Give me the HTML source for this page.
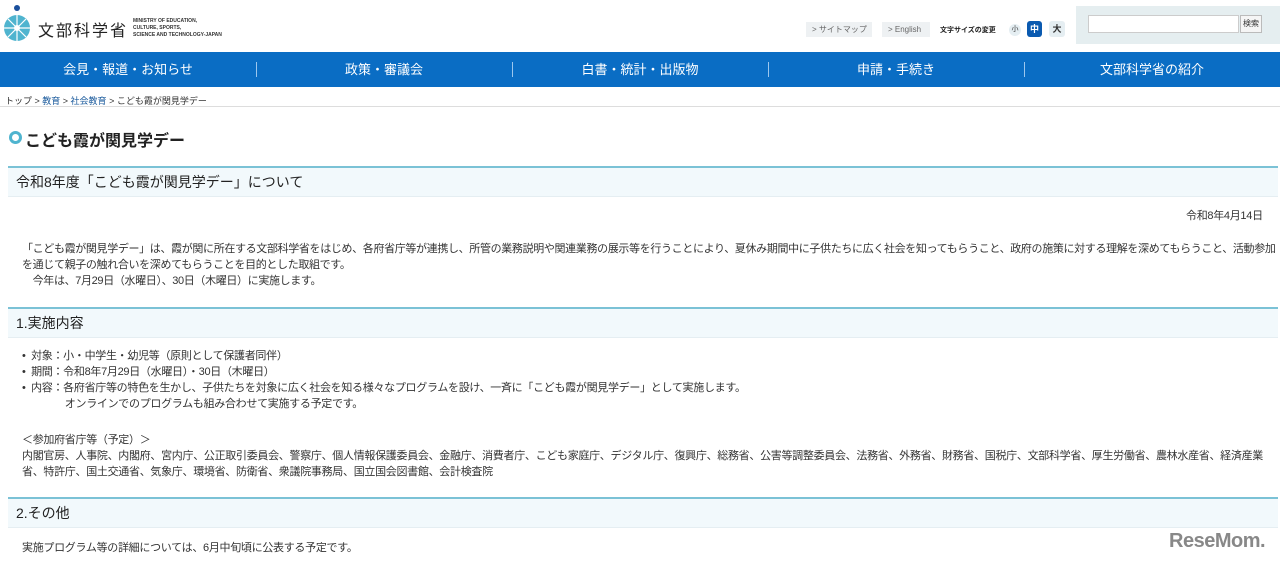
<!DOCTYPE html>
<html><head><meta charset="utf-8"><style>
body{margin:0;width:1280px;height:566px;overflow:hidden;background:#fff;font-family:"Liberation Sans","Noto Sans CJK JP",sans-serif;color:#333;font-size:11px}
.abs{position:absolute}
.nav{position:absolute;top:52px;left:0;width:1280px;height:35px;background:#0a6dc4;display:flex}
.nav div{flex:1;color:#fff;font-size:13px;text-align:center;line-height:35px;position:relative}
.nav div+div:before{content:"";position:absolute;left:0;top:10px;height:15px;border-left:1px solid #9cc7ee}
h2{position:absolute;left:8px;width:1270px;margin:0;font-weight:normal;font-size:14px;color:#222;background:#f2f9fc;border-top:2px solid #7bc2d6;height:28px;line-height:28px;text-indent:8px;border-bottom:1px solid #e5eef2}
p{position:absolute;margin:0;font-size:11px;line-height:16px;color:#333;letter-spacing:-0.3px}
</style></head><body>
<svg class="abs" style="left:2px;top:4px" width="32" height="40" viewBox="0 0 32 40"><circle cx="15" cy="4" r="3" fill="#1a4f9c"/><circle cx="15" cy="24" r="13" fill="#4fb4cf"/><g stroke="#fff" stroke-width="1.2"><line x1="15" y1="11" x2="15" y2="37"/><line x1="2" y1="24" x2="28" y2="24"/><line x1="6" y1="15" x2="24" y2="33"/><line x1="24" y1="15" x2="6" y2="33"/></g><circle cx="15" cy="24" r="3" fill="#fff"/></svg>
<div class="abs" style="left:38px;top:17px;font-size:16px;color:#222;letter-spacing:2px">文部科学省</div>
<div class="abs" style="left:133px;top:18px;font-size:5px;line-height:7px;color:#333;font-weight:bold">MINISTRY OF EDUCATION,<br>CULTURE, SPORTS,<br>SCIENCE AND TECHNOLOGY-JAPAN</div>
<div class="abs" style="left:806px;top:22px;width:66px;height:15px;background:#eef1f3;font-size:8px;line-height:15px;color:#666;text-indent:6px">&gt; サイトマップ</div>
<div class="abs" style="left:882px;top:22px;width:48px;height:15px;background:#eef1f3;font-size:8px;line-height:15px;color:#666;text-indent:6px">&gt; English</div>
<div class="abs" style="left:940px;top:25px;font-size:7px;font-weight:bold;color:#222">文字サイズの変更</div>
<div class="abs" style="left:1009px;top:24px;width:12px;height:12px;border-radius:6px;background:#e5eef2;font-size:7px;text-align:center;line-height:12px">小</div>
<div class="abs" style="left:1027px;top:21px;width:15px;height:16px;border-radius:3px;background:#0a5ab0;color:#fff;font-size:9px;font-weight:bold;text-align:center;line-height:16px">中</div>
<div class="abs" style="left:1049px;top:21px;width:16px;height:16px;border-radius:3px;background:#e5eef2;font-size:9px;font-weight:bold;text-align:center;line-height:16px">大</div>
<div class="abs" style="left:1076px;top:6px;width:204px;height:38px;background:#e5eef0"></div>
<div class="abs" style="left:1088px;top:15px;width:149px;height:16px;background:#fff;border:1px solid #ccc"></div>
<div class="abs" style="left:1240px;top:15px;width:20px;height:16px;background:#f5f5f5;border:1px solid #bbb;font-size:8px;text-align:center;line-height:16px">検索</div>
<div class="nav"><div>会見・報道・お知らせ</div><div>政策・審議会</div><div>白書・統計・出版物</div><div>申請・手続き</div><div>文部科学省の紹介</div></div>
<div class="abs" style="left:5px;top:94px;font-size:9px;color:#333">トップ &gt; <span style="color:#1a5a9c">教育</span> &gt; <span style="color:#1a5a9c">社会教育</span> &gt; こども霞が関見学デー</div>
<div class="abs" style="left:0;top:106px;width:1280px;border-top:1px solid #ddd"></div>
<div class="abs" style="left:9px;top:131px;width:7px;height:7px;border:3px solid #4fb4cf;border-radius:50%"></div>
<div class="abs" style="left:25px;top:127px;font-size:16px;font-weight:bold;color:#222">こども霞が関見学デー</div>
<h2 style="top:166px">令和8年度「こども霞が関見学デー」について</h2>
<p style="left:1186px;top:208px">令和8年4月14日</p>
<p style="left:22px;top:241px;width:1256px;letter-spacing:-0.35px">「こども霞が関見学デー」は、霞が関に所在する文部科学省をはじめ、各府省庁等が連携し、所管の業務説明や関連業務の展示等を行うことにより、夏休み期間中に子供たちに広く社会を知ってもらうこと、政府の施策に対する理解を深めてもらうこと、活動参加を通じて親子の触れ合いを深めてもらうことを目的とした取組です。<br>　今年は、7月29日（水曜日）、30日（木曜日）に実施します。</p>
<h2 style="top:307px">1.実施内容</h2>
<p style="left:22px;top:348px">•&nbsp; 対象：小・中学生・幼児等（原則として保護者同伴）<br>•&nbsp; 期間：令和8年7月29日（水曜日）・30日（木曜日）<br>•&nbsp; 内容：各府省庁等の特色を生かし、子供たちを対象に広く社会を知る様々なプログラムを設け、一斉に「こども霞が関見学デー」として実施します。<br>　　　　オンラインでのプログラムも組み合わせて実施する予定です。</p>
<p style="left:22px;top:432px">＜参加府省庁等（予定）＞</p>
<p style="left:22px;top:448px;width:1245px;word-break:break-all">内閣官房、人事院、内閣府、宮内庁、公正取引委員会、警察庁、個人情報保護委員会、金融庁、消費者庁、こども家庭庁、デジタル庁、復興庁、総務省、公害等調整委員会、法務省、外務省、財務省、国税庁、文部科学省、厚生労働省、農林水産省、経済産業省、特許庁、国土交通省、気象庁、環境省、防衛省、衆議院事務局、国立国会図書館、会計検査院</p>
<h2 style="top:497px">2.その他</h2>
<p style="left:22px;top:540px">実施プログラム等の詳細については、6月中旬頃に公表する予定です。</p>
<div class="abs" style="left:1169px;top:530px;font-size:20px;font-weight:bold;color:#888;letter-spacing:-0.5px">ReseMom.</div>
</body></html>
